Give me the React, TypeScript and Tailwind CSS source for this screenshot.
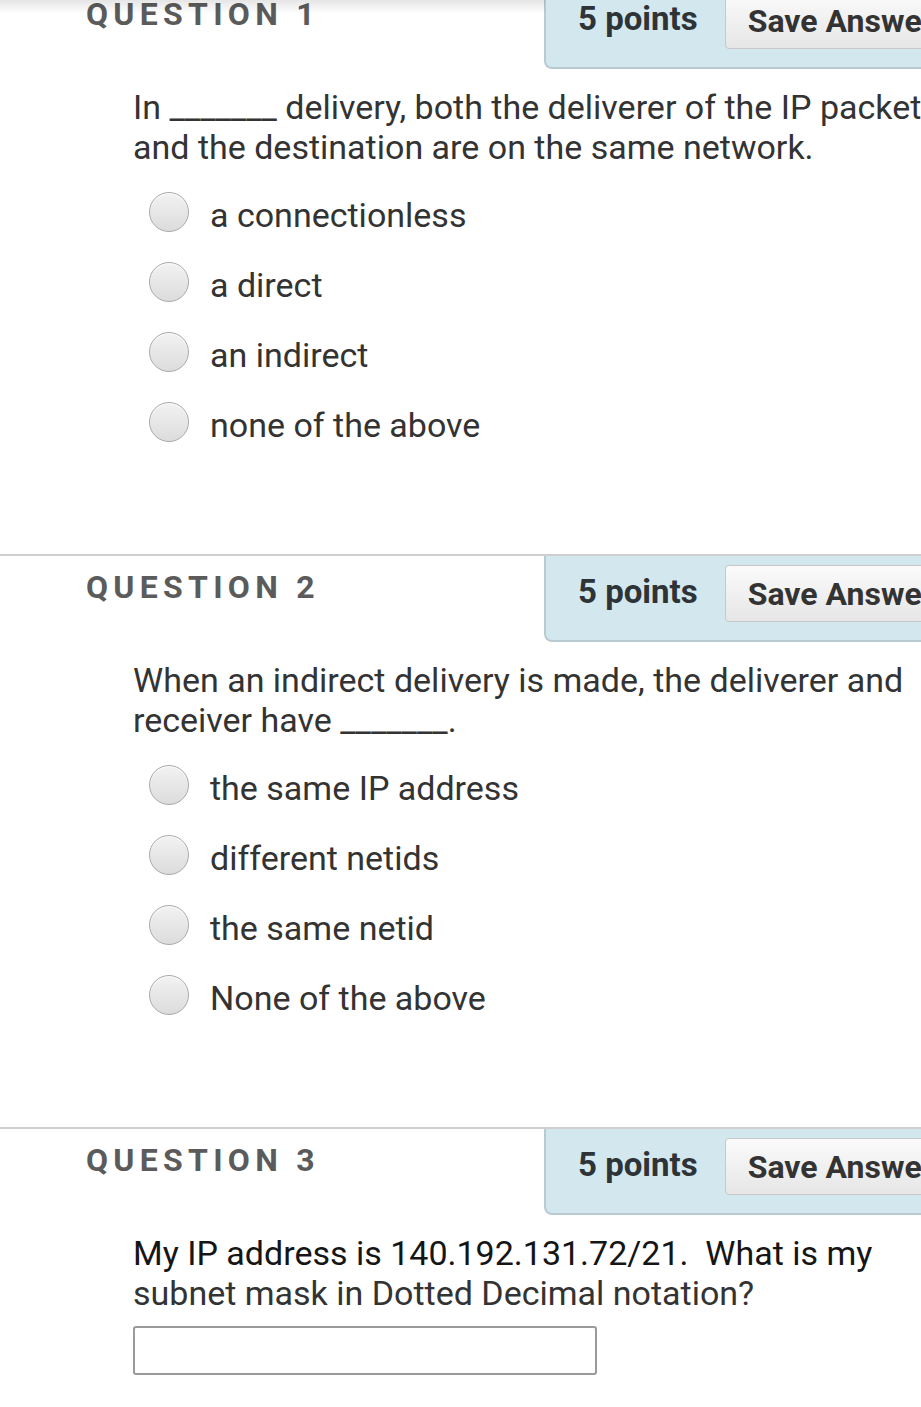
import React from 'react';

interface Question {
  num: number;
  lines: React.ReactNode[];
  options?: string[];
  input?: boolean;
}

const questions: Question[] = [
  {
    num: 1,
    lines: ['In _______ delivery, both the deliverer of the IP packet', 'and the destination are on the same network.'],
    options: ['a connectionless', 'a direct', 'an indirect', 'none of the above'],
  },
  {
    num: 2,
    lines: ['When an indirect delivery is made, the deliverer and', 'receiver have _______.'],
    options: ['the same IP address', 'different netids', 'the same netid', 'None of the above'],
  },
  {
    num: 3,
    lines: [
      <span className="text-[#151515]">My IP address is 140.192.131.72/21.&nbsp; What is my</span>,
      'subnet mask in Dotted Decimal notation?',
    ],
    input: true,
  },
];

const Radio: React.FC<{ label: string }> = ({ label }) => (
  <label className="flex items-center h-[70px] cursor-pointer">
    <span className="w-[40px] h-[40px] rounded-full border border-[#a9a9a9] bg-gradient-to-b from-[#f2f2f2] to-[#dcdcdc] shadow-[inset_0_1px_1px_rgba(255,255,255,0.8)]" />
    <span className="ml-[21px] mt-[6px] text-[34px] leading-[40px] text-[#333]">{label}</span>
  </label>
);

const QuestionBlock: React.FC<{ q: Question }> = ({ q }) => (
  <section className="border-t-2 border-[#cfcfcf]">
    <div className="flex items-start">
      <h2 className="pl-[86px] pt-[13px] text-[32px] leading-[36px] font-bold tracking-[5.3px] text-[#5b5b5b]">
        QUESTION {q.num}
      </h2>
      <div className="ml-auto w-[456px] h-[86px] flex items-center pl-[32px] bg-[#d3e8ee] border-l-2 border-b-2 border-[#b9cbd0] rounded-bl-[8px]">
        <span className="text-[33px] font-bold text-[#2d3336] -mt-[12px]">5 points</span>
        <button className="ml-[27px] -mt-[9px] h-[57px] pl-[22px] pr-[30px] rounded-[4px] border border-[#c8c8c8] bg-gradient-to-b from-[#fbfbfb] to-[#e6e6e6] text-[32px] font-bold text-[#333] whitespace-nowrap">
          Save Answer
        </button>
      </div>
    </div>
    <div className="pl-[133px] pt-[18px] w-[960px] text-[34px] leading-[40px] text-[#333]">
      {q.lines.map((l, i) => (
        <p key={i} className="whitespace-nowrap">{l}</p>
      ))}
    </div>
    {q.options && (
      <div className="pl-[149px] pt-[10px] pb-[97px]">
        {q.options.map((o) => (
          <Radio key={o} label={o} />
        ))}
      </div>
    )}
    {q.input && (
      <div className="pl-[133px] pt-[13px] pb-[40px]">
        <input className="w-[464px] h-[49px] border-2 border-[#9a9a9a] rounded-[3px] bg-white" />
      </div>
    )}
  </section>
);

export default function App() {
  return (
    <div className="relative w-[921px] h-[1407px] overflow-hidden bg-white" style={{ fontFamily: 'Roboto, "Liberation Sans", sans-serif' }}>
      <div className="w-[1000px] -mt-[19px]">
        {questions.map((q) => (
          <QuestionBlock key={q.num} q={q} />
        ))}
      </div>
      <div className="absolute top-0 left-0 w-[545px] h-[14px] bg-gradient-to-b from-black/10 to-transparent" />
    </div>
  );
}
